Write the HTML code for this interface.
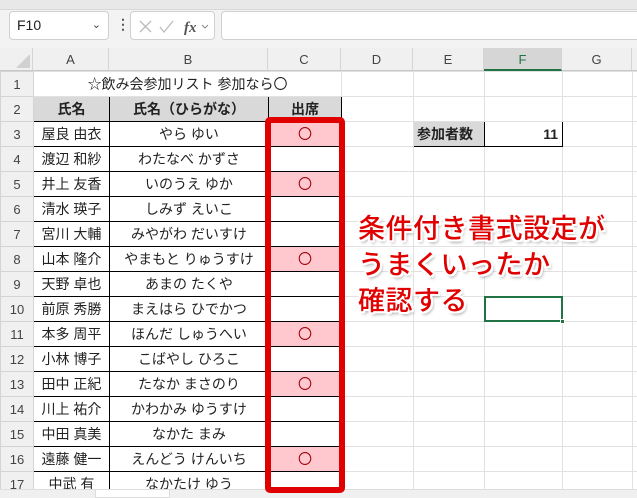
<!DOCTYPE html>
<html><head><meta charset="utf-8"><style>
*{margin:0;padding:0;box-sizing:border-box}
body{width:637px;height:498px;overflow:hidden;background:#fff;position:relative;font-family:"Liberation Sans","Noto Sans CJK JP",sans-serif}
.a{position:absolute}
table{position:absolute;left:0;top:71px;border-collapse:collapse;table-layout:fixed;width:642px}
td{height:25px;border:1px solid #e1e1e1;font-size:14px;text-align:center;color:#222;white-space:nowrap;overflow:hidden;padding:0}
td.h{background:#f0f0f0;color:#444;font-size:13px;border-color:#d4d4d4}
td.b{border:1px solid #000}
td.g{background:#d9d9d9;font-weight:bold;border:1px solid #000}
td.p{background:#ffc7ce;color:#9c0006;border:1px solid #000}
.ch{position:absolute;top:48px;height:23px;background:#f0f0f0;color:#444;font-size:13px;text-align:center;line-height:23px;border-right:1px solid #d4d4d4;border-bottom:1px solid #c8c8c8}
.red{position:absolute;color:#e00000;font-size:27px;font-weight:500;font-family:"Noto Sans CJK JP",sans-serif;text-shadow:2px 0 #fff,-2px 0 #fff,0 2px #fff,0 -2px #fff,2px 2px #fff,-2px -2px #fff,2px -2px #fff,-2px 2px #fff,2px 3px 3px #999;line-height:35px;white-space:nowrap;letter-spacing:0.5px}
</style></head><body>
<div class="a" style="left:0;top:0;width:637px;height:48px;background:#f3f3f3"></div>
<div class="a" style="left:0;top:0;width:637px;height:10px;background:#e8e8e8;border-bottom:1px solid #d8d8d8"></div>
<div class="a" style="left:9px;top:11px;width:100px;height:29px;background:#fff;border:1px solid #d0d0d0;border-radius:4px;font-size:14px;line-height:27px;padding-left:7px;color:#222">F10<span style="position:absolute;right:7px;top:0;font-size:11px;color:#444">&#8964;</span></div>
<div class="a" style="left:116px;top:16px;font-size:14px;color:#555;font-weight:bold">&#8942;</div>
<div class="a" style="left:130px;top:11px;width:85px;height:29px;background:#fff;border:1px solid #d0d0d0;border-radius:4px">
<svg width="85" height="29"><path d="M9 9l11 11M20 9L9 20" stroke="#bbb" stroke-width="1.3" fill="none"/><path d="M29 15l4 5 9-11" stroke="#bbb" stroke-width="1.3" fill="none"/><text x="53" y="20" font-family="Liberation Serif" font-style="italic" font-weight="bold" font-size="15" fill="#555">fx</text><path d="M71 13l3 3 3-3" stroke="#888" fill="none"/></svg></div>
<div class="a" style="left:221px;top:11px;width:420px;height:29px;background:#fff;border:1px solid #d0d0d0;border-radius:4px"></div>
<div class="ch" style="left:0;width:33px"><svg width="33" height="23"><path d="M30 20V6L16 20Z" fill="#d0d0d0"/></svg></div>
<div class="ch" style="left:33px;width:76px">A</div>
<div class="ch" style="left:109px;width:159px">B</div>
<div class="ch" style="left:268px;width:73px">C</div>
<div class="ch" style="left:341px;width:72px">D</div>
<div class="ch" style="left:413px;width:71px">E</div>
<div class="ch" style="left:484px;width:78px;background:#d6d6d6;color:#217346;border-bottom:2px solid #217346">F</div>
<div class="ch" style="left:562px;width:70px">G</div>
<div class="ch" style="left:632px;width:10px"></div>
<table>
<colgroup><col style="width:33px"><col style="width:76px"><col style="width:159px"><col style="width:73px"><col style="width:72px"><col style="width:71px"><col style="width:78px"><col style="width:70px"><col style="width:10px"></colgroup>
<tr><td class="h">1</td><td colspan="3">☆飲み会参加リスト 参加なら〇</td><td></td><td></td><td></td><td></td><td></td></tr>
<tr><td class="h">2</td><td class="g">氏名</td><td class="g">氏名（ひらがな）</td><td class="g">出席</td><td></td><td></td><td></td><td></td><td></td></tr>
<tr><td class="h">3</td><td class="b">屋良 由衣</td><td class="b">やら ゆい</td><td class="p">〇</td><td></td><td class="g" style="text-align:left;padding-left:3px">参加者数</td><td class="b" style="text-align:right;padding-right:4px;font-weight:bold">11</td><td></td><td></td></tr>
<tr><td class="h">4</td><td class="b">渡辺 和紗</td><td class="b">わたなべ かずさ</td><td class="b"></td><td></td><td></td><td></td><td></td><td></td></tr>
<tr><td class="h">5</td><td class="b">井上 友香</td><td class="b">いのうえ ゆか</td><td class="p">〇</td><td></td><td></td><td></td><td></td><td></td></tr>
<tr><td class="h">6</td><td class="b">清水 瑛子</td><td class="b">しみず えいこ</td><td class="b"></td><td></td><td></td><td></td><td></td><td></td></tr>
<tr><td class="h">7</td><td class="b">宮川 大輔</td><td class="b">みやがわ だいすけ</td><td class="b"></td><td></td><td></td><td></td><td></td><td></td></tr>
<tr><td class="h">8</td><td class="b">山本 隆介</td><td class="b">やまもと りゅうすけ</td><td class="p">〇</td><td></td><td></td><td></td><td></td><td></td></tr>
<tr><td class="h">9</td><td class="b">天野 卓也</td><td class="b">あまの たくや</td><td class="b"></td><td></td><td></td><td></td><td></td><td></td></tr>
<tr><td class="h">10</td><td class="b">前原 秀勝</td><td class="b">まえはら ひでかつ</td><td class="b"></td><td></td><td></td><td></td><td></td><td></td></tr>
<tr><td class="h">11</td><td class="b">本多 周平</td><td class="b">ほんだ しゅうへい</td><td class="p">〇</td><td></td><td></td><td></td><td></td><td></td></tr>
<tr><td class="h">12</td><td class="b">小林 博子</td><td class="b">こばやし ひろこ</td><td class="b"></td><td></td><td></td><td></td><td></td><td></td></tr>
<tr><td class="h">13</td><td class="b">田中 正紀</td><td class="b">たなか まさのり</td><td class="p">〇</td><td></td><td></td><td></td><td></td><td></td></tr>
<tr><td class="h">14</td><td class="b">川上 祐介</td><td class="b">かわかみ ゆうすけ</td><td class="b"></td><td></td><td></td><td></td><td></td><td></td></tr>
<tr><td class="h">15</td><td class="b">中田 真美</td><td class="b">なかた まみ</td><td class="b"></td><td></td><td></td><td></td><td></td><td></td></tr>
<tr><td class="h">16</td><td class="b">遠藤 健一</td><td class="b">えんどう けんいち</td><td class="p">〇</td><td></td><td></td><td></td><td></td><td></td></tr>
<tr><td class="h">17</td><td class="b">中武 有</td><td class="b">なかたけ ゆう</td><td class="b"></td><td></td><td></td><td></td><td></td><td></td></tr>
</table>
<div class="a" style="left:0;top:489px;width:637px;height:9px;background:#f0f0f0;border-top:1px solid #ddd"></div>
<div class="a" style="left:95px;top:489px;width:75px;height:9px;background:#fff;border:1px solid #ddd"></div>
<div class="a" style="left:484px;top:296px;width:79px;height:26px;border:2px solid #217346"></div>
<div class="a" style="left:560px;top:319px;width:5px;height:5px;background:#217346;border:1px solid #fff"></div>
<div class="a" style="left:265px;top:117px;width:80px;height:376px;border:6px solid #e00000;border-radius:5px"></div>
<div class="red" style="left:358px;top:209px">条件付き書式設定が</div>
<div class="red" style="left:358px;top:245px">うまくいったか</div>
<div class="red" style="left:358px;top:281px">確認する</div>
</body></html>
